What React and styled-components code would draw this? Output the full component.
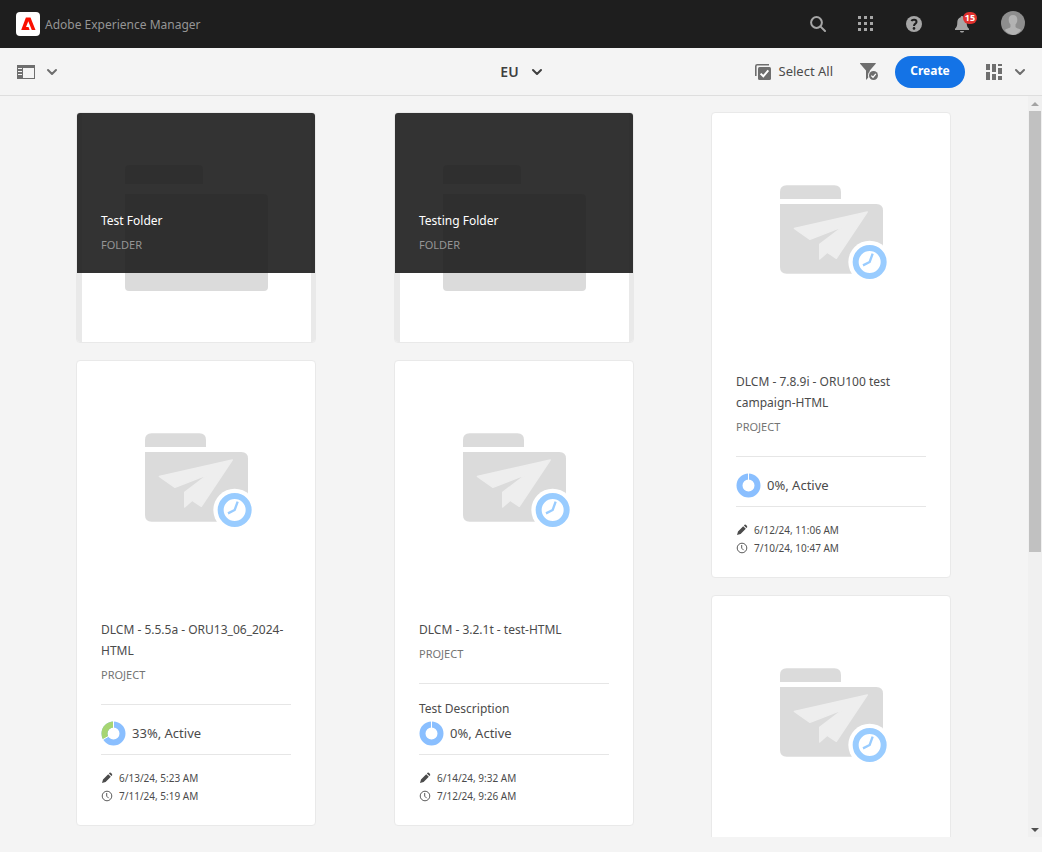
import React from "react";
import styled, { createGlobalStyle } from "styled-components";

const GlobalStyle = createGlobalStyle`
  * { box-sizing: border-box; }
  body { margin: 0; background: #f4f4f4; color: #4b4b4b; font: 12px/21px "Noto Sans", "Open Sans", sans-serif; }
  button { font: inherit; color: inherit; }
  svg { display: block; flex: none; }
`;

const Shell = styled.div`
  display: flex;
  flex-direction: column;
  height: 100vh;
  padding-bottom: 15px;
`;

const Header = styled.header`
  display: flex;
  align-items: center;
  justify-content: space-between;
  flex: none;
  height: 48px;
  padding-left: 16px;
  background: #1e1e1e;
  color: #959595;
`;

const Brand = styled.a`
  display: flex;
  align-items: center;
  gap: 5px;
  color: inherit;
  text-decoration: none;
  white-space: nowrap;
`;

const HeaderActions = styled.nav`
  display: flex;
  height: 48px;
`;

const HeaderButton = styled.button`
  position: relative;
  display: flex;
  align-items: center;
  justify-content: center;
  width: 48px;
  height: 48px;
  padding: 0;
  border: 0;
  background: none;
  color: #a6a6a6;
  cursor: pointer;
`;

const AccountButton = styled(HeaderButton)`
  width: 56px;
  height: 46px;
  padding-right: 2px;
`;

const Badge = styled.span`
  position: absolute;
  top: 12px;
  right: 9px;
  width: 14px;
  height: 12px;
  border-radius: 6px;
  background: #e1312f;
  color: #fff;
  font-size: 9px;
  font-weight: 700;
  line-height: 12px;
  text-align: center;
`;

const Toolbar = styled.div`
  display: grid;
  grid-template-columns: 1fr auto 1fr;
  align-items: center;
  flex: none;
  height: 48px;
  padding: 0 16px 0 17px;
  border-bottom: 1px solid #dedede;
`;

const ToolGroup = styled.div`
  display: flex;
  align-items: center;
  justify-content: flex-end;
`;

const ToolButton = styled.button`
  display: flex;
  align-items: center;
  justify-self: ${(p) => (p.$start ? "start" : "auto")};
  gap: ${(p) => p.$gap || 8}px;
  padding: 0;
  margin-right: ${(p) => p.$after || 0}px;
  border: 0;
  background: none;
  color: ${(p) => (p.$strong ? "#3f3f3f" : p.$quiet ? "#6e6e6e" : "#4b4b4b")};
  font-size: ${(p) => (p.$strong ? 14 : 13)}px;
  font-weight: ${(p) => (p.$strong ? 600 : 400)};
  white-space: nowrap;
  cursor: pointer;
`;

const CreateButton = styled.button`
  width: 70px;
  height: 32px;
  margin-right: 21px;
  padding: 0 0 2px;
  border: 0;
  border-radius: 16px;
  background: #1473e6;
  color: #fff;
  font-weight: 700;
  cursor: pointer;
`;

const Viewport = styled.main`
  display: flex;
  flex: 1;
  min-height: 0;
  overflow: hidden;
`;

const Board = styled.div`
  display: grid;
  grid-template-columns: 318fr 318fr 316fr;
  flex: 1;
  padding: 16px 39px 0 37px;
`;

const Column = styled.div`
  display: flex;
  flex-direction: column;
  align-items: center;
  gap: 17px;
`;

const Card = styled.article`
  flex: none;
  width: 240px;
  min-height: ${(p) => (p.$folder ? 231 : 466)}px;
  border: 1px solid #e9e9e9;
  border-radius: 4px;
  background: #fff;
  overflow: hidden;
`;

const FolderFace = styled.div`
  position: relative;
  height: 229px;
  padding: 52px 0 0 43px;
  border: solid #e9e9e9;
  border-width: 0 4px 0 5px;
`;

const FolderCaption = styled.div`
  position: absolute;
  top: 0;
  left: -5px;
  width: 238px;
  height: 160px;
  padding: 97px 24px 0;
  background: rgba(26, 26, 26, 0.89);
  color: #fff;
`;

const Artwork = styled.div`
  height: 258px;
  padding: 72px 0 0 68px;
`;

const Details = styled.div`
  padding: 0 24px 20px;
`;

const Title = styled.h2`
  margin: 0;
  font-size: 12px;
  line-height: 21px;
  font-weight: 400;
`;

const Kind = styled.p`
  margin: 5px 0 0;
  color: ${(p) => (p.$light ? "#959595" : "#747474")};
  font-size: 11px;
  line-height: 18px;
`;

const Progress = styled.section`
  margin-top: 20px;
  padding: 14px 0 8px;
  border: solid #e6e6e6;
  border-width: 1px 0;
`;

const Description = styled.p`
  margin: 0;
`;

const Status = styled.div`
  display: flex;
  align-items: center;
  gap: 6px;
  height: 25px;
  margin-top: 2px;
  font-size: 13px;
`;

const Dates = styled.div`
  padding-top: 14px;
  font-size: 10px;
  line-height: 18px;
`;

const DateRow = styled.div`
  display: flex;
  align-items: center;
  gap: 6px;
`;

const Scrollbar = styled.div`
  display: flex;
  flex-direction: column;
  align-items: center;
  width: 14px;
  flex: none;
  background: #f0f0f0;
`;

const ScrollArrow = styled.div`
  display: flex;
  align-items: center;
  justify-content: center;
  flex: none;
  height: 15px;
  color: ${(p) => (p.$dim ? "#a3a3a3" : "#505050")};
`;

const ScrollTrack = styled.div`
  flex: 1;
  width: 12px;
`;

const ScrollThumb = styled.div`
  height: 62%;
  background: #c1c1c1;
`;

const Chevron = () => (
  <svg width="12" height="8" viewBox="0 0 12 8" fill="none" stroke="currentColor" strokeWidth="2" strokeLinecap="round" strokeLinejoin="round">
    <path d="M2 2l4 4 4-4" />
  </svg>
);

const AdobeLogo = () => (
  <svg width="24" height="24" viewBox="0 0 24 24">
    <rect width="24" height="24" rx="4" fill="#fff" />
    <path fill="#fa0f00" d="M9.900 5.500h4.600L19.500 18h-3.700L12.300 9.200 10 15h2.500l1.100 3H5.200z" />
  </svg>
);

const Rail = () => (
  <svg width="18" height="14" viewBox="0 0 18 14">
    <path fill="#6e6e6e" fillRule="evenodd" d="M0 0h18v14H0zM6 3v10h11V3zM1 3v1h4V3zM1 6v1h4V6zM1 9v1h4V9z" />
  </svg>
);

const SearchIcon = () => (
  <svg width="16" height="16" viewBox="0 0 16 16" fill="none" stroke="currentColor" strokeWidth="2" strokeLinecap="round">
    <circle cx="6.500" cy="6.500" r="5.400" />
    <path d="M10.600 10.600L15 15" />
  </svg>
);

const AppsIcon = () => (
  <svg width="16" height="16" viewBox="0 0 16 16" fill="currentColor">
    {[0, 6, 12].map((y) => [0, 6, 12].map((x) => <rect key={`${x}-${y}`} x={x} y={y} width="3" height="3" />))}
  </svg>
);

const HelpIcon = () => (
  <svg width="16" height="16" viewBox="0 0 16 16">
    <circle cx="8" cy="8" r="8" fill="currentColor" />
    <path d="M5.500 5.100c.5-1.600 5-2 5 .8C10.500 7.700 8 7.600 8 9.900" fill="none" stroke="#1e1e1e" strokeWidth="2" />
    <circle cx="8" cy="12.400" r="1.300" fill="#1e1e1e" />
  </svg>
);

const BellIcon = () => (
  <svg width="16" height="18" viewBox="0 0 16 18" fill="currentColor">
    <path d="M8 1c.9 0 1.300.6 1.300 1.300C11.800 3 12.700 5 12.700 7.500c0 3.500.8 5 2.300 6.200V15H1v-1.300c1.500-1.200 2.300-2.700 2.300-6.200C3.300 5 4.200 3 6.700 2.300 6.700 1.600 7.100 1 8 1zM6 16h4c0 2-4 2-4 0z" />
  </svg>
);

const Avatar = () => (
  <svg width="24" height="24" viewBox="0 0 24 24">
    <circle cx="12" cy="12" r="12" fill="#8e8e8e" />
    <path fill="#b3b3b3" d="M12 4c3 0 4.500 2.300 4.300 5.300-.1 2.200-1 3.300-1.800 4.300v2.200c0 1.700 4.300 1.500 5.600 3.300A12 12 0 0 1 12 24a12 12 0 0 1-8.100-4.900c1.300-1.800 5.600-1.600 5.600-3.300v-2.200c-.8-1-1.700-2.100-1.800-4.300C7.500 6.300 9 4 12 4z" />
  </svg>
);

const SelectAllIcon = () => (
  <svg width="16" height="16" viewBox="0 0 16 16">
    <path d="M.8 12V2.300C.8 1.200 1.200.8 2.300.8H14" fill="none" stroke="#6e6e6e" strokeWidth="1.600" />
    <rect x="3" y="3" width="13" height="13" rx="1.500" fill="#6e6e6e" />
    <path d="M5.600 9.600l2.700 2.700 5-6" fill="none" stroke="#fff" strokeWidth="2" />
  </svg>
);

const FilterIcon = () => (
  <svg width="18" height="17" viewBox="0 0 18 17">
    <path fill="#6e6e6e" d="M.4 0h15c.5 0 .6.5.3.8L9.800 7.600V13L6 17V7.600L.1.800C-.2.500 0 0 .4 0z" />
    <circle cx="13.500" cy="12.500" r="5.500" fill="#f4f4f4" />
    <circle cx="13.500" cy="12.500" r="4.500" fill="#6e6e6e" />
    <path d="M11.300 12.600l1.700 1.700 2.800-3.400" fill="none" stroke="#fff" strokeWidth="1.300" />
  </svg>
);

const CardViewIcon = () => (
  <svg width="16" height="16" viewBox="0 0 16 16" fill="#6e6e6e">
    <path d="M0 0h4v6H0zM6 0h4v8H6zM12 0h4v2h-4zM12 4h4v6h-4zM0 8h4v8H0zM6 10h4v6H6zM12 12h4v4h-4z" />
  </svg>
);

const ProjectArt = () => (
  <svg width="110" height="100" viewBox="45 40 330 300">
    <path fill="#dbdbdb" d="M45 82V61q0-20 20-20h143q20 0 20 20v21zM45 97h289q20 0 20 20v169q0 20-20 20H65q-20 0-20-20z" />
    <path fill="#eee" stroke="#eee" strokeWidth="4" strokeLinejoin="round" d="M88 170l219-49-93 139-27-18-23 20v-44l69-53-98 38z" />
    <circle cx="314" cy="271" r="64" fill="#fff" />
    <circle cx="314" cy="271" r="42" fill="#fff" stroke="#9cf" strokeWidth="18" />
    <path d="M323 246l-9 25-20 10" fill="none" stroke="#9cf" strokeWidth="7" />
  </svg>
);

const Ring = ({ percent }) => {
  const circumference = 2 * Math.PI * 9;
  return (
    <svg width="25" height="25" viewBox="0 0 25 25" fill="none" strokeWidth="6">
      <circle cx="12.500" cy="12.500" r="9" stroke="#8abfff" />
      {percent > 0 && (
        <g transform="matrix(0 -1 -1 0 25 25)">
          <circle cx="12.500" cy="12.500" r="9" stroke="#a6d572" strokeDasharray={`${(circumference * percent) / 100} ${circumference}`} />
        </g>
      )}
      <path d="M12.500 0v7" stroke="#fff" strokeWidth="1" />
      {percent > 0 && <path d="M7.800 15.200L1.700 18.700" stroke="#fff" strokeWidth="1" />}
    </svg>
  );
};

const Pencil = () => (
  <svg width="12" height="12" viewBox="0 0 12 12" fill="#4b4b4b">
    <path d="M1 11l1-3.600L7.200 2.200l2.600 2.600L4.600 10zM7.900 1.500l.8-.8c.7-.6 3.100 1.700 2.500 2.500l-.8.8z" />
  </svg>
);

const Clock = () => (
  <svg width="12" height="12" viewBox="0 0 12 12" fill="none" stroke="#5b5b5b">
    <circle cx="6" cy="6" r="4.800" />
    <path d="M5.700 3v3.200l2 2" />
  </svg>
);

function FolderCard({ title }) {
  return (
    <Card $folder>
      <FolderFace>
        <svg width="143" height="126" viewBox="0 0 143 126" fill="#dbdbdb">
          <path d="M0 19V4q0-4 4-4h70q4 0 4 4v15zM0 29h139q4 0 4 4v89q0 4-4 4H4q-4 0-4-4z" />
        </svg>
        <FolderCaption>
          <Title>{title}</Title>
          <Kind $light>FOLDER</Kind>
        </FolderCaption>
      </FolderFace>
    </Card>
  );
}

function ProjectCard({ title, description, percent, modified, due }) {
  return (
    <Card>
      <Artwork><ProjectArt /></Artwork>
      {title && (
        <Details>
          <Title>{title}</Title>
          <Kind>PROJECT</Kind>
          <Progress>
            {description && <Description>{description}</Description>}
            <Status><Ring percent={percent} />{percent}%, Active</Status>
          </Progress>
          <Dates>
            <DateRow><Pencil />{modified}</DateRow>
            <DateRow><Clock />{due}</DateRow>
          </Dates>
        </Details>
      )}
    </Card>
  );
}

export default function App() {
  return (
    <Shell>
      <GlobalStyle />
      <Header>
        <Brand href="#"><AdobeLogo />Adobe Experience Manager</Brand>
        <HeaderActions>
          <HeaderButton aria-label="Search"><SearchIcon /></HeaderButton>
          <HeaderButton aria-label="Solutions"><AppsIcon /></HeaderButton>
          <HeaderButton aria-label="Help"><HelpIcon /></HeaderButton>
          <HeaderButton aria-label="Notifications"><BellIcon /><Badge>15</Badge></HeaderButton>
          <AccountButton aria-label="Account"><Avatar /></AccountButton>
        </HeaderActions>
      </Header>
      <Toolbar>
        <ToolButton $start $quiet $gap={11} aria-label="Toggle side panel"><Rail /><Chevron /></ToolButton>
        <ToolButton $strong $gap={12}>EU<Chevron /></ToolButton>
        <ToolGroup>
          <ToolButton $after={27}><SelectAllIcon />Select All</ToolButton>
          <ToolButton $after={17} aria-label="Filter"><FilterIcon /></ToolButton>
          <CreateButton>Create</CreateButton>
          <ToolButton $quiet $gap={12} aria-label="Card view"><CardViewIcon /><Chevron /></ToolButton>
        </ToolGroup>
      </Toolbar>
      <Viewport>
        <Board>
          <Column>
            <FolderCard title="Test Folder" />
            <ProjectCard title="DLCM - 5.5.5a - ORU13_06_2024-HTML" percent={33} modified="6/13/24, 5:23 AM" due="7/11/24, 5:19 AM" />
          </Column>
          <Column>
            <FolderCard title="Testing Folder" />
            <ProjectCard title="DLCM - 3.2.1t - test-HTML" description="Test Description" percent={0} modified="6/14/24, 9:32 AM" due="7/12/24, 9:26 AM" />
          </Column>
          <Column>
            <ProjectCard title="DLCM - 7.8.9i - ORU100 test campaign-HTML" percent={0} modified="6/12/24, 11:06 AM" due="7/10/24, 10:47 AM" />
            <ProjectCard />
          </Column>
        </Board>
        <Scrollbar aria-hidden="true">
          <ScrollArrow $dim><svg width="8" height="4" viewBox="0 0 8 4"><path fill="currentColor" d="M0 4l4-4 4 4z" /></svg></ScrollArrow>
          <ScrollTrack><ScrollThumb /></ScrollTrack>
          <ScrollArrow><svg width="8" height="4" viewBox="0 0 8 4"><path fill="currentColor" d="M0 0l4 4 4-4z" /></svg></ScrollArrow>
        </Scrollbar>
      </Viewport>
    </Shell>
  );
}
